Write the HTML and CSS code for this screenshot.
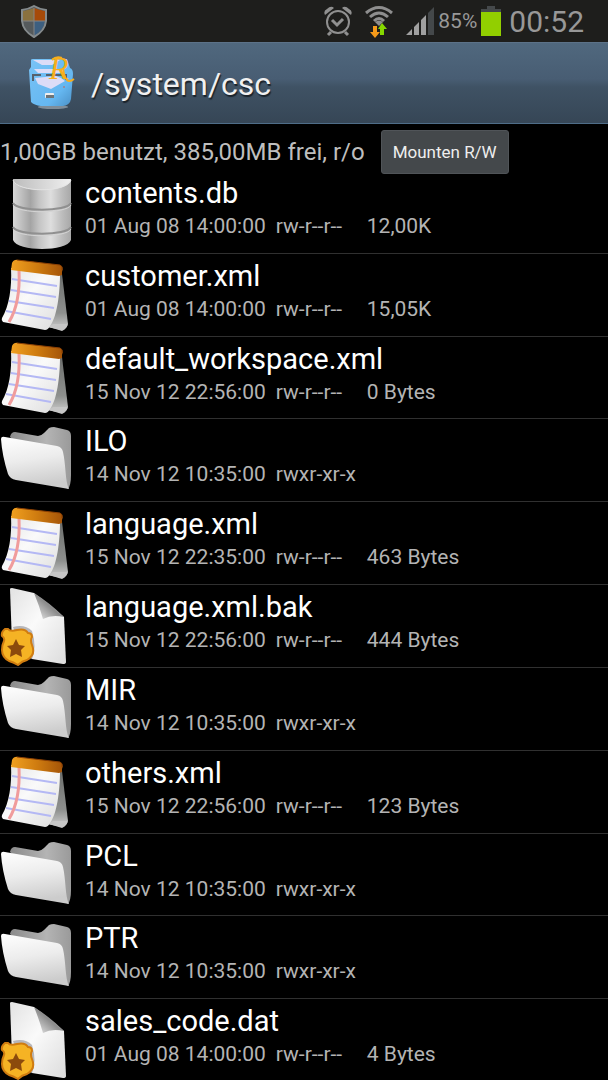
FILE: index.html
```
<!DOCTYPE html>
<html lang="de">
<head>
    <meta charset="UTF-8">
    <meta name="viewport" content="width=device-width, initial-scale=1.0">
    <title>/system/csc</title>
    <link rel="stylesheet" href="styles.css">
</head>
<body>
    <!-- Symbole -->
    <svg class="sprite" width="0" height="0" aria-hidden="true">
        <defs>
            <linearGradient id="metal" x1="0" x2="1" y1="0" y2="0">
                <stop offset="0" stop-color="#d8d8d8"/>
                <stop offset="0.12" stop-color="#c4c4c4"/>
                <stop offset="0.3" stop-color="#a4a4a4"/>
                <stop offset="0.45" stop-color="#c4c4c4"/>
                <stop offset="0.65" stop-color="#dedede"/>
                <stop offset="0.85" stop-color="#bcbcbc"/>
                <stop offset="1" stop-color="#a8a8a8"/>
            </linearGradient>
            <linearGradient id="metalTop" x1="0" x2="1" y1="0" y2="0">
                <stop offset="0" stop-color="#bcbcbc"/>
                <stop offset="1" stop-color="#efefef"/>
            </linearGradient>
            <linearGradient id="paper" x1="0" x2="1" y1="0" y2="1">
                <stop offset="0" stop-color="#e2e2e2"/>
                <stop offset="0.45" stop-color="#fafafa"/>
                <stop offset="1" stop-color="#dcdcdc"/>
            </linearGradient>
            <linearGradient id="padTop" x1="0" x2="1" y1="0" y2="0">
                <stop offset="0" stop-color="#f0a020"/>
                <stop offset="0.5" stop-color="#cf7c10"/>
                <stop offset="1" stop-color="#a45408"/>
            </linearGradient>
            <linearGradient id="padBack" x1="0" x2="0" y1="0" y2="1">
                <stop offset="0" stop-color="#6c6e6c"/>
                <stop offset="0.7" stop-color="#8e908e"/>
                <stop offset="1" stop-color="#d0d0d0"/>
            </linearGradient>
            <linearGradient id="folderFront" x1="0" x2="0.2" y1="0" y2="1">
                <stop offset="0" stop-color="#ffffff"/>
                <stop offset="0.5" stop-color="#ececec"/>
                <stop offset="1" stop-color="#cccccc"/>
            </linearGradient>
            <linearGradient id="folderBack" x1="0" x2="1" y1="0" y2="0">
                <stop offset="0" stop-color="#8a8a8a"/>
                <stop offset="0.6" stop-color="#b4b4b4"/>
                <stop offset="1" stop-color="#9a9a9a"/>
            </linearGradient>
            <linearGradient id="fold" x1="0" x2="1" y1="1" y2="0">
                <stop offset="0" stop-color="#f0f0f0"/>
                <stop offset="0.5" stop-color="#8c8c8c"/>
                <stop offset="1" stop-color="#c4c4c4"/>
            </linearGradient>
        </defs>
        <symbol id="db" viewBox="0 0 72 81">
            <path d="M13 9V69C17 81 67 81 71 69V9Z" fill="url(#metal)"/>
            <ellipse cx="42" cy="9" rx="29" ry="10" fill="url(#metalTop)"/>
            <path d="M13 9C17 22 67 22 71 9" fill="none" stroke="#e4e4e4" stroke-width="1"/>
            <path d="M13 32C17 41 67 41 71 32M13 56C17 65 67 65 71 56" fill="none" stroke="#909090" stroke-width="2"/>
            <path d="M13 34C17 43 67 43 71 34M13 58C17 67 67 67 71 58" fill="none" stroke="#d4d4d4" stroke-width="1"/>
        </symbol>
        <symbol id="note" viewBox="0 0 72 81">
            <path d="M59 19L62 20L68 70Q68 73 62 76L47 73Z" fill="url(#padBack)"/>
            <path d="M53 70L67 70Q68 74 62 77L49 73Z" fill="#c6c6c6"/>
            <path d="M11 14L60 20C60 40 57 63 50 72Q48 76 45 76L3 68Q1 66 2 64C9 52 12 34 11 14Z" fill="url(#paper)"/>
            <path d="M12 25L57 32M11 36L56 43M9 47L54 54M6 57L51 65" fill="none" stroke="#b4b8f4" stroke-width="2"/>
            <path d="M19 16C20 38 17 55 9 68" fill="none" stroke="#f09c9c" stroke-width="3"/>
            <path d="M11 16L12 9Q14 5 18 6L60 11Q64 13 62 18V21L59 22Z" fill="url(#padTop)"/>
            <path d="M17 6L60 11Q63 12 62 16" fill="none" stroke="#8c4004" stroke-width="1"/>
        </symbol>
        <symbol id="folder" viewBox="0 0 72 81">
            <path d="M10 18Q11 13 15 13L38 17Q41 17 44 14L49 9Q51 8 54 8L67 11Q71 12 71 17V56Q71 66 68 70L58 64Z" fill="url(#folderBack)"/>
            <path d="M1 20Q1 17 5 18L57 27Q62 28 63 33C66 46 65 62 69 70L16 61Q10 60 8 55Q2 36 1 20Z" fill="url(#folderFront)"/>
        </symbol>
        <symbol id="locked" viewBox="0 0 72 81">
            <path d="M10 4Q10 3 12 3L34 8Q50 20 64 32L66 77Q66 79 63 79L32 74L12 58Z" fill="url(#paper)"/>
            <path d="M34 8Q39 20 43 34Q52 29 64 32Q50 18 34 8Z" fill="url(#fold)"/>
            <path d="M13 42Q25 39 32 46Q37 62 32 74L25 75Z" fill="#77777f" opacity="0.5"/>
            <path d="M5 44L8 44Q10 47 17 45Q25 43 28 48Q32 48 32 52Q30 55 32 60Q36 70 27 75Q22 76 18 80Q13 77 9 76Q2 72 2 65Q2 60 4 56Q5 53 2 51Q1 47 5 44Z" fill="#f5b324" stroke="#d07c10" stroke-width="2"/>
            <path d="M16 54L19 60L25 61L21 65L22 72L16 69L10 72L11 65L7 61L13 60Z" fill="#8c4a0c"/>
        </symbol>
    </svg>

    <div class="status-bar">
        <svg class="shield" viewBox="0 0 28 34" width="28" height="34" aria-hidden="true">
            <path d="M14 2Q19 5 26 6V17Q25 27 14 33Q3 27 2 17V6Q9 5 14 2Z" fill="#555a5c"/>
            <path d="M14 4V17H3V7Q9 6 14 4Z" fill="#8a713e"/>
            <path d="M14 4Q19 6 25 7V17H14Z" fill="#a64a08"/>
            <path d="M14 17H25Q24 26 14 32Z" fill="#3d5f80"/>
            <path d="M14 4V32M3 17H25" stroke="#858585" stroke-width="1"/>
            <path d="M14 2Q19 5 26 6V17Q25 27 14 33Q3 27 2 17V6Q9 5 14 2Z" fill="none" stroke="#858b8d" stroke-width="2"/>
        </svg>
        <div class="status-right">
            <svg viewBox="0 0 28 32" width="28" height="32" aria-hidden="true">
                <g fill="none" stroke="#909090" stroke-width="2">
                    <circle cx="14" cy="17" r="11"/>
                    <path d="M8 15L13 20L19 14" stroke-width="3"/>
                    <path d="M7 27L4 30M21 27L24 30" stroke-width="3"/>
                </g>
                <path d="M1 10Q-1 6 3 4Q7 0 10 3ZM27 10Q29 6 25 4Q21 0 18 3Z" fill="#909090"/>
            </svg>
            <svg class="wifi" viewBox="0 0 30 34" width="30" height="34" aria-hidden="true">
                <g fill="none" stroke="#8e8e8e" stroke-width="3">
                    <path d="M2 9Q15 -2 28 9"/>
                    <path d="M6 13Q15 5 24 13"/>
                    <path d="M10 17Q15 12 20 17"/>
                </g>
                <path d="M11 18Q15 15 19 18L15 22Z" fill="#8e8e8e"/>
                <path d="M9 22H13V28H16L11 34L6 28H9Z" fill="#f59a1a"/>
                <path d="M16 31H20V25H23L18 19L14 25H16Z" fill="#86d800"/>
            </svg>
            <svg class="signal" viewBox="0 0 28 28" width="28" height="28" aria-hidden="true">
                <path d="M0 28L6 22V28ZM8 20L13 15V28H8ZM15 13L20 8V28H15Z" fill="#a0a0a0"/>
                <path d="M22 6L28 0V28H22Z" fill="#44484a"/>
            </svg>
            <span class="percent">85%</span>
            <svg class="battery" viewBox="0 0 20 30" width="20" height="30" aria-hidden="true">
                <path d="M6 0H14V3H20V7H0V3H6Z" fill="#45494b"/>
                <path d="M0 6H20V30H0Z" fill="#92cf00"/>
            </svg>
            <span class="clock">00:52</span>
        </div>
    </div>

    <header>
        <svg class="logo" viewBox="0 0 50 56" width="50" height="56" aria-hidden="true">
            <defs>
                <linearGradient id="cabinet" x1="0" x2="1" y1="0" y2="1">
                    <stop offset="0" stop-color="#79c3f6"/>
                    <stop offset="0.7" stop-color="#65b7f1"/>
                    <stop offset="1" stop-color="#4a8fc4"/>
                </linearGradient>
            </defs>
            <ellipse cx="26" cy="52" rx="15" ry="2" fill="#7f8d99"/>
            <path d="M4 5Q4 4 6 4H40L43 13Q46 14 46 19L44 44Q43 50 36 51H14Q7 50 4 47L2 15L4 12Z" fill="url(#cabinet)"/>
            <path d="M6 5H33L25 10H15ZM7 14H37V18H11ZM8 23L29 21L34 23L38 26L24 34L11 29Z" fill="#dcdcf7"/>
            <path d="M6 26V20H14M19 20H39V25" fill="none" stroke="#56606c" stroke-width="2"/>
            <rect x="18" y="38" width="9" height="5" rx="1" fill="#eeeeee"/>
            <rect x="19" y="40" width="8" height="3" fill="#6d7478"/>
            <circle cx="37" cy="32" r="1" fill="#a5818a"/>
            <text x="22" y="24" class="logo-letter">R</text>
            <path d="M25 5Q29 1 35 3M36 13Q38 31 47 24" fill="none" stroke="#f7ae1c" stroke-width="2"/>
        </svg>
        <h1>/system/csc</h1>
    </header>

    <div class="mount-info">
        <span>1,00GB benutzt, 385,00MB frei, r/o</span>
        <button type="button">Mounten R/W</button>
    </div>

    <main class="file-list">
        <a class="file" href="#">
            <svg class="file-icon" aria-hidden="true"><use href="#db"/></svg>
            <span class="file-text">
                <span class="file-name">contents.db</span>
                <span class="file-meta"><span>01 Aug 08 14:00:00</span><span class="rights">rw-r--r--</span><span>12,00K</span></span>
            </span>
        </a>
        <a class="file" href="#">
            <svg class="file-icon" aria-hidden="true"><use href="#note"/></svg>
            <span class="file-text">
                <span class="file-name">customer.xml</span>
                <span class="file-meta"><span>01 Aug 08 14:00:00</span><span class="rights">rw-r--r--</span><span>15,05K</span></span>
            </span>
        </a>
        <a class="file" href="#">
            <svg class="file-icon" aria-hidden="true"><use href="#note"/></svg>
            <span class="file-text">
                <span class="file-name">default_workspace.xml</span>
                <span class="file-meta"><span>15 Nov 12 22:56:00</span><span class="rights">rw-r--r--</span><span>0 Bytes</span></span>
            </span>
        </a>
        <a class="file" href="#">
            <svg class="file-icon" aria-hidden="true"><use href="#folder"/></svg>
            <span class="file-text">
                <span class="file-name">ILO</span>
                <span class="file-meta"><span>14 Nov 12 10:35:00</span><span class="rights">rwxr-xr-x</span></span>
            </span>
        </a>
        <a class="file" href="#">
            <svg class="file-icon" aria-hidden="true"><use href="#note"/></svg>
            <span class="file-text">
                <span class="file-name">language.xml</span>
                <span class="file-meta"><span>15 Nov 12 22:35:00</span><span class="rights">rw-r--r--</span><span>463 Bytes</span></span>
            </span>
        </a>
        <a class="file" href="#">
            <svg class="file-icon" aria-hidden="true"><use href="#locked"/></svg>
            <span class="file-text">
                <span class="file-name">language.xml.bak</span>
                <span class="file-meta"><span>15 Nov 12 22:56:00</span><span class="rights">rw-r--r--</span><span>444 Bytes</span></span>
            </span>
        </a>
        <a class="file" href="#">
            <svg class="file-icon" aria-hidden="true"><use href="#folder"/></svg>
            <span class="file-text">
                <span class="file-name">MIR</span>
                <span class="file-meta"><span>14 Nov 12 10:35:00</span><span class="rights">rwxr-xr-x</span></span>
            </span>
        </a>
        <a class="file" href="#">
            <svg class="file-icon" aria-hidden="true"><use href="#note"/></svg>
            <span class="file-text">
                <span class="file-name">others.xml</span>
                <span class="file-meta"><span>15 Nov 12 22:56:00</span><span class="rights">rw-r--r--</span><span>123 Bytes</span></span>
            </span>
        </a>
        <a class="file" href="#">
            <svg class="file-icon" aria-hidden="true"><use href="#folder"/></svg>
            <span class="file-text">
                <span class="file-name">PCL</span>
                <span class="file-meta"><span>14 Nov 12 10:35:00</span><span class="rights">rwxr-xr-x</span></span>
            </span>
        </a>
        <a class="file" href="#">
            <svg class="file-icon" aria-hidden="true"><use href="#folder"/></svg>
            <span class="file-text">
                <span class="file-name">PTR</span>
                <span class="file-meta"><span>14 Nov 12 10:35:00</span><span class="rights">rwxr-xr-x</span></span>
            </span>
        </a>
        <a class="file" href="#">
            <svg class="file-icon" aria-hidden="true"><use href="#locked"/></svg>
            <span class="file-text">
                <span class="file-name">sales_code.dat</span>
                <span class="file-meta"><span>01 Aug 08 14:00:00</span><span class="rights">rw-r--r--</span><span>4 Bytes</span></span>
            </span>
        </a>
    </main>
</body>
</html>
```
FILE: styles.css
```
* {
    box-sizing: border-box;
}

body {
    margin: 0;
    height: 100vh;
    display: flex;
    flex-direction: column;
    overflow: hidden;
    background-color: #000;
    color: #fff;
    font-family: Roboto, 'Noto Sans', sans-serif;
}

svg {
    display: block;
    flex-shrink: 0;
}

.sprite {
    position: absolute;
}

.status-bar {
    display: flex;
    justify-content: space-between;
    align-items: center;
    flex-shrink: 0;
    height: 42px;
    padding: 0 24px 0 20px;
    background-color: #1e1e1c;
    color: #989898;
}

.status-right {
    display: flex;
    align-items: center;
}

.wifi {
    margin-left: 12px;
}

.signal {
    margin-left: 12px;
}

.percent {
    margin-left: 4px;
    font-size: 21px;
}

.battery {
    margin-left: 4px;
}

.clock {
    margin-left: 8px;
    font-size: 30px;
}

header {
    display: flex;
    align-items: center;
    flex-shrink: 0;
    height: 82px;
    padding-left: 27px;
    background: linear-gradient(#50687e, #485d73 45%, #3f5264 55%, #364656);
    border-top: 1px solid #5c7288;
    border-bottom: 1px solid #4f6d88;
}

h1 {
    margin: 0 0 0 14px;
    padding-top: 2px;
    font-size: 32px;
    font-weight: 400;
    color: #f0f0f0;
    text-shadow: 1px 2px 1px #1a222a;
}

.logo {
    overflow: visible;
}

.logo-letter {
    font-family: 'Liberation Serif', serif;
    font-size: 32px;
    font-style: italic;
    fill: #f7ae1c;
}

.mount-info {
    display: flex;
    align-items: center;
    flex-shrink: 0;
    gap: 16px;
    height: 55px;
    font-size: 24px;
    color: #bebebe;
}

button {
    height: 44px;
    padding: 0 11px;
    border: 1px solid #505458;
    border-radius: 3px;
    background-color: #44484b;
    color: #eee;
    font-family: inherit;
    font-size: 17px;
}

.file-list {
    display: flex;
    flex-direction: column;
    flex: 1;
    min-height: 0;
    margin-bottom: -2px;
    overflow: hidden;
}

.file {
    display: flex;
    flex: 1 0 0;
    border-bottom: 1px solid #303030;
    color: inherit;
    text-decoration: none;
}

/* list is scrolled a little */
.file:first-child {
    margin-top: -8px;
}

.file-icon {
    width: 72px;
    height: 81px;
}

.file-text {
    display: flex;
    flex-direction: column;
    padding: 8px 0 0 13px;
}

.file-name {
    font-size: 29px;
    line-height: 28px;
}

.file-meta {
    display: flex;
    gap: 10px;
    padding-top: 4px;
    font-size: 21px;
    line-height: 30px;
    color: #b4b4b4;
}

.rights {
    min-width: 81px;
}
```
